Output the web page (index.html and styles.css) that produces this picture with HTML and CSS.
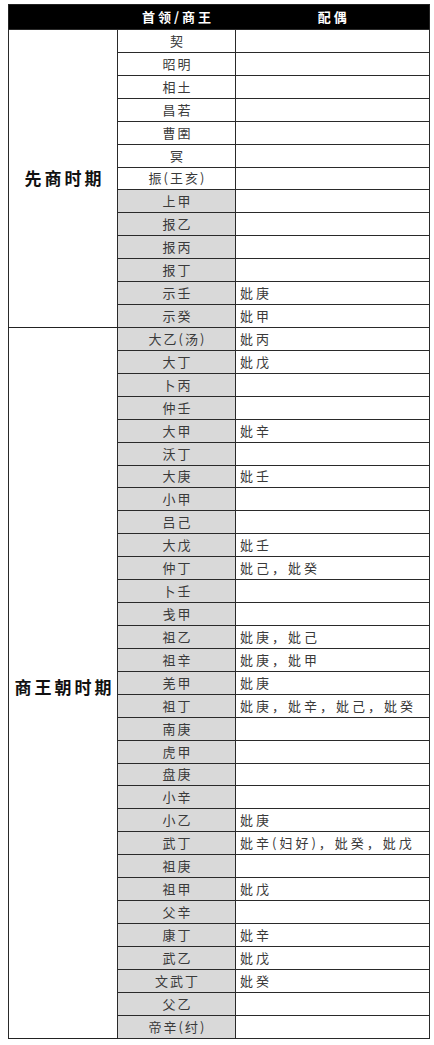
FILE: index.html
```html
<!DOCTYPE html>
<html lang="zh">
<head>
<meta charset="utf-8">
<link rel="stylesheet" href="styles.css">
</head>
<body>
<table class="tbl">
<colgroup><col class="c1"><col class="c2"><col class="c3"></colgroup>
<thead>
<tr class="head"><th></th><th>首领/商王</th><th>配偶</th></tr>
</thead>
<tbody>
<tr><td class="era" rowspan="13">先商时期</td><td class="king">契</td><td class="wife"></td></tr>
<tr><td class="king">昭明</td><td class="wife"></td></tr>
<tr><td class="king">相土</td><td class="wife"></td></tr>
<tr><td class="king">昌若</td><td class="wife"></td></tr>
<tr><td class="king">曹圉</td><td class="wife"></td></tr>
<tr><td class="king">冥</td><td class="wife"></td></tr>
<tr><td class="king">振(王亥)</td><td class="wife"></td></tr>
<tr><td class="king g">上甲</td><td class="wife"></td></tr>
<tr><td class="king g">报乙</td><td class="wife"></td></tr>
<tr><td class="king g">报丙</td><td class="wife"></td></tr>
<tr><td class="king g">报丁</td><td class="wife"></td></tr>
<tr><td class="king g">示壬</td><td class="wife">妣庚</td></tr>
<tr><td class="king g">示癸</td><td class="wife">妣甲</td></tr>
<tr><td class="era era2" rowspan="31">商王朝时期</td><td class="king g">大乙(汤)</td><td class="wife">妣丙</td></tr>
<tr><td class="king g">大丁</td><td class="wife">妣戊</td></tr>
<tr><td class="king g">卜丙</td><td class="wife"></td></tr>
<tr><td class="king g">仲壬</td><td class="wife"></td></tr>
<tr><td class="king g">大甲</td><td class="wife">妣辛</td></tr>
<tr><td class="king g">沃丁</td><td class="wife"></td></tr>
<tr><td class="king g">大庚</td><td class="wife">妣壬</td></tr>
<tr><td class="king g">小甲</td><td class="wife"></td></tr>
<tr><td class="king g">吕己</td><td class="wife"></td></tr>
<tr><td class="king g">大戊</td><td class="wife">妣壬</td></tr>
<tr><td class="king g">仲丁</td><td class="wife">妣己，妣癸</td></tr>
<tr><td class="king g">卜壬</td><td class="wife"></td></tr>
<tr><td class="king g">戋甲</td><td class="wife"></td></tr>
<tr><td class="king g">祖乙</td><td class="wife">妣庚，妣己</td></tr>
<tr><td class="king g">祖辛</td><td class="wife">妣庚，妣甲</td></tr>
<tr><td class="king g">羌甲</td><td class="wife">妣庚</td></tr>
<tr><td class="king g">祖丁</td><td class="wife">妣庚，妣辛，妣己，妣癸</td></tr>
<tr><td class="king g">南庚</td><td class="wife"></td></tr>
<tr><td class="king g">虎甲</td><td class="wife"></td></tr>
<tr><td class="king g">盘庚</td><td class="wife"></td></tr>
<tr><td class="king g">小辛</td><td class="wife"></td></tr>
<tr><td class="king g">小乙</td><td class="wife">妣庚</td></tr>
<tr><td class="king g">武丁</td><td class="wife">妣辛(妇好)，妣癸，妣戊</td></tr>
<tr><td class="king g">祖庚</td><td class="wife"></td></tr>
<tr><td class="king g">祖甲</td><td class="wife">妣戊</td></tr>
<tr><td class="king g">父辛</td><td class="wife"></td></tr>
<tr><td class="king g">康丁</td><td class="wife">妣辛</td></tr>
<tr><td class="king g">武乙</td><td class="wife">妣戊</td></tr>
<tr><td class="king g">文武丁</td><td class="wife">妣癸</td></tr>
<tr><td class="king g">父乙</td><td class="wife"></td></tr>
<tr><td class="king g">帝辛(纣)</td><td class="wife"></td></tr>
</tbody>
</table>
</body>
</html>
```

FILE: styles.css
```css
html, body {
  margin: 0;
  padding: 0;
  background: #fff;
}
body {
  font-family: "Noto Sans CJK SC", "Noto Sans", sans-serif;
  color: #3a3a3a;
}
.tbl {
  margin: 4px 0 0 8px;
  width: 421px;
  table-layout: fixed;
  border-collapse: collapse;
  border: 1.5px solid #222;
}
.c1 { width: 109px; }
.c2 { width: 118px; }
.c3 { width: 194px; }
.head th {
  background: #000;
  color: #fff;
  height: 24px;
  padding: 0 0 0 3px;
  font-size: 13px;
  font-weight: 700;
  line-height: 24px;
  letter-spacing: 3px;
  border: none;
}
tbody tr {
  height: 22.93px;
}
td {
  padding: 0;
  border: 1px solid #2a2a2a;
  font-size: 13px;
  line-height: 20px;
  white-space: nowrap;
}
.era {
  text-align: center;
  vertical-align: middle;
  font-size: 17px;
  font-weight: 700;
  letter-spacing: 3px;
  padding-left: 3px;
  color: #111;
  border-bottom: 1px solid #222;
}
.era2 {
  padding-top: 8px;
}
.king {
  text-align: center;
  letter-spacing: 2px;
  padding-left: 2px;
}
.king.g {
  background: #d9d9d9;
}
.wife {
  text-align: left;
  padding-left: 4px;
  letter-spacing: 3px;
}
```
